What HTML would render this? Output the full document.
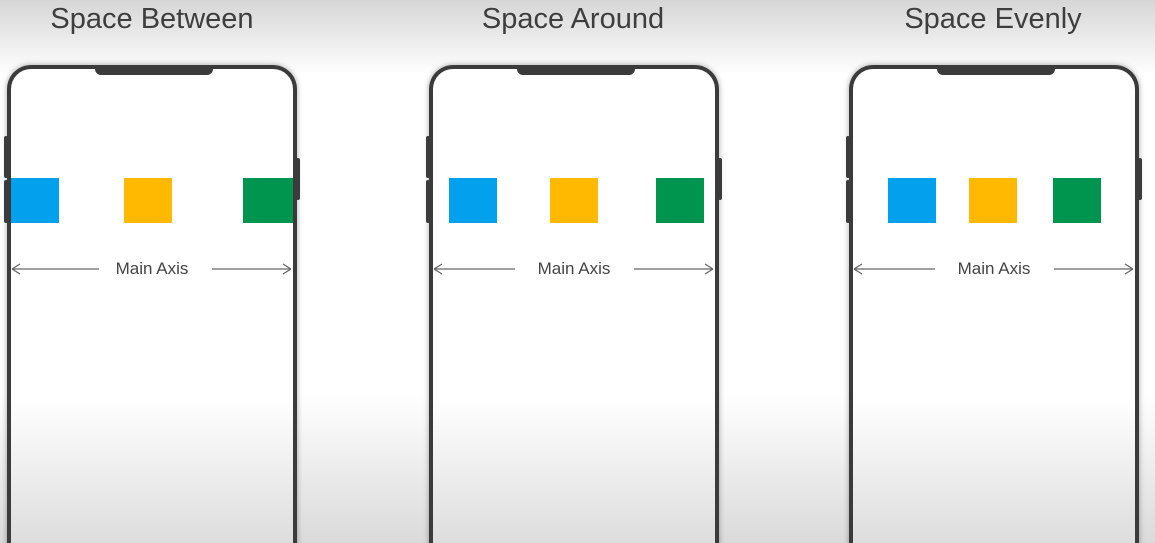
<!DOCTYPE html>
<html style="overflow:hidden;height:543px"><head><style>
body{margin:0;width:1155px;height:543px;overflow:hidden;position:relative;font-family:"Liberation Sans",sans-serif;background:linear-gradient(#d6d6d6 0px,#fff 75px,#fff 395px,#dadada 543px)}
.t{position:absolute;top:0;font-size:29px;color:#3e3e3e;text-align:center;width:340px;line-height:38px}
.ph{position:absolute;top:65px;width:282px;height:500px;border:4px solid #3b3b3b;border-bottom:none;border-radius:24px 24px 0 0;background:linear-gradient(#fff 0px,#fff 330px,#dcdcdc 478px);box-shadow:0 0 6px rgba(0,0,0,.35)}
.notch{position:absolute;top:-1px;left:84px;width:118px;height:7px;background:#3b3b3b;border-radius:0 0 6px 6px}
.btn{position:absolute;width:4px;background:#3b3b3b;border-radius:2px}
.sq{position:absolute;top:109px;width:48px;height:45px}
.b{background:#03a0ee}.y{background:#ffb900}.g{background:#00954f}
.ax{position:absolute;top:188px;left:0;width:282px;height:24px}
.lbl{position:absolute;left:0;width:282px;top:188px;text-align:center;font-size:17px;color:#444;line-height:24px}
</style></head><body>
<div class="t" style="left:-18px">Space Between</div>
<div class="t" style="left:403px">Space Around</div>
<div class="t" style="left:823px">Space Evenly</div>

<div class="ph" style="left:7px">
<div class="notch"></div>
<div class="btn" style="left:-7px;top:67px;height:42px"></div>
<div class="btn" style="left:-7px;top:111px;height:43px"></div>
<div class="btn" style="left:285px;top:89px;height:42px"></div>
<div class="sq b" style="left:0"></div><div class="sq y" style="left:113px"></div><div class="sq g" style="left:232px;width:50px"></div>
<svg class="ax" viewBox="0 0 282 24"><g stroke="#666" stroke-width="1.3" fill="none"><path d="M1 12H88M1 12l8-5M1 12l8 5M201 12H280M280 12l-8-5M280 12l-8 5"/></g></svg>
<div class="lbl">Main Axis</div>
</div>

<div class="ph" style="left:429px">
<div class="notch"></div>
<div class="btn" style="left:-7px;top:67px;height:42px"></div>
<div class="btn" style="left:-7px;top:111px;height:43px"></div>
<div class="btn" style="left:285px;top:89px;height:42px"></div>
<div class="sq b" style="left:16px"></div><div class="sq y" style="left:117px"></div><div class="sq g" style="left:223px"></div>
<svg class="ax" viewBox="0 0 282 24"><g stroke="#666" stroke-width="1.3" fill="none"><path d="M1 12H82M1 12l8-5M1 12l8 5M201 12H280M280 12l-8-5M280 12l-8 5"/></g></svg>
<div class="lbl">Main Axis</div>
</div>

<div class="ph" style="left:849px">
<div class="notch"></div>
<div class="btn" style="left:-7px;top:67px;height:42px"></div>
<div class="btn" style="left:-7px;top:111px;height:43px"></div>
<div class="btn" style="left:285px;top:89px;height:42px"></div>
<div class="sq b" style="left:35px"></div><div class="sq y" style="left:116px"></div><div class="sq g" style="left:200px"></div>
<svg class="ax" viewBox="0 0 282 24"><g stroke="#666" stroke-width="1.3" fill="none"><path d="M1 12H82M1 12l8-5M1 12l8 5M201 12H280M280 12l-8-5M280 12l-8 5"/></g></svg>
<div class="lbl">Main Axis</div>
</div>
</body></html>
